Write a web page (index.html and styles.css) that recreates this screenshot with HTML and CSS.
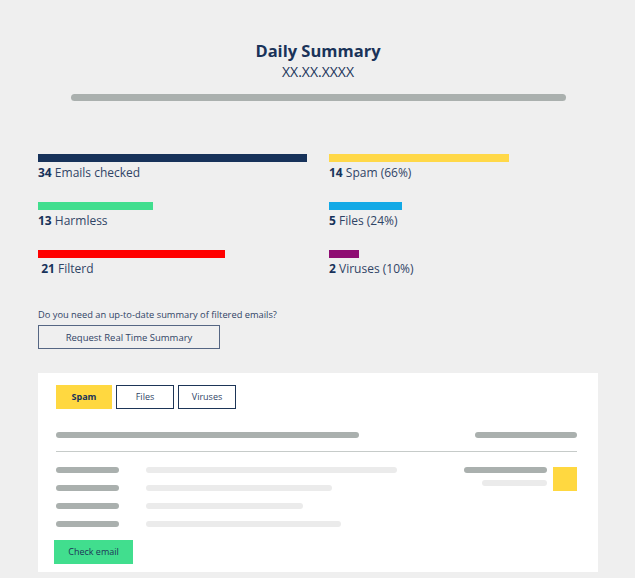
FILE: index.html
```html
<!DOCTYPE html>
<html>
	<head>
		<meta charset="UTF-8">
		<title>Daily Summary</title>
		<link rel="stylesheet" href="styles.css">
	</head>
	<body>
		<div id="page">
			<div class="head">
				<h1>Daily Summary</h1>
				<div class="date">XX.XX.XXXX</div>
				<div class="head-bar"></div>
			</div>

			<div class="stats">
				<div class="stat">
					<div class="bar navy" style="width: 269px;"></div>
					<div class="label"><b>34</b> Emails checked</div>
				</div>
				<div class="stat">
					<div class="bar yellow" style="width: 180px;"></div>
					<div class="label"><b>14</b> Spam (66%)</div>
				</div>
				<div class="stat">
					<div class="bar green" style="width: 115px;"></div>
					<div class="label"><b>13</b> Harmless</div>
				</div>
				<div class="stat">
					<div class="bar blue" style="width: 73px;"></div>
					<div class="label"><b>5</b> Files (24%)</div>
				</div>
				<div class="stat">
					<div class="bar red" style="width: 187px;"></div>
					<div class="label">&nbsp;<b>21</b> Filterd</div>
				</div>
				<div class="stat">
					<div class="bar purple" style="width: 30px;"></div>
					<div class="label"><b>2</b> Viruses (10%)</div>
				</div>
			</div>

			<p class="ask">Do you need an up-to-date summary of filtered emails?</p>
			<a href="javascript:;" class="btn-outline">Request Real Time Summary</a>

			<div class="card">
				<div class="tabs">
					<span class="tab on">Spam</span>
					<span class="tab">Files</span>
					<span class="tab">Viruses</span>
				</div>
				<div class="thead">
					<div class="sk dark" style="width: 303px;"></div>
					<div class="sk dark" style="width: 102px;"></div>
				</div>
				<div class="divider"></div>
				<div class="mail">
					<div class="lines">
						<div class="line"><div class="sk dark short"></div><div class="sk light" style="width: 251px;"></div></div>
						<div class="line"><div class="sk dark short"></div><div class="sk light" style="width: 186px;"></div></div>
						<div class="line"><div class="sk dark short"></div><div class="sk light" style="width: 157px;"></div></div>
						<div class="line"><div class="sk dark short"></div><div class="sk light" style="width: 195px;"></div></div>
					</div>
					<div class="aside">
						<div class="aside-bars">
							<div class="sk dark" style="width: 83px;"></div>
							<div class="sk light" style="width: 65px;"></div>
						</div>
						<div class="square"></div>
					</div>
				</div>
				<a href="javascript:;" class="btn-green">Check email</a>
			</div>
		</div>
	</body>
</html>
```

FILE: styles.css
```css
html, body{
    margin: 0;
    background: #efefef;
}
body{
    font-family: "Open Sans", "Liberation Sans", sans-serif;
    color: #1d3557;
}
#page{
    width: 560px;
    margin-left: 38px;
    padding-top: 39px;
}
.head{
    display: flex;
    flex-direction: column;
    align-items: center;
}
.head h1{
    margin: 0;
    font-size: 16.5px;
    line-height: 24px;
    font-weight: bold;
    color: #1a3359;
}
.date{
    font-size: 14px;
    line-height: 17px;
    color: #1a3359;
}
.head-bar{
    width: 495px;
    height: 7px;
    margin-top: 14px;
    border-radius: 4px;
    background: #aab0ae;
}
.stats{
    display: grid;
    grid-template-columns: 291px 269px;
    row-gap: 20px;
    margin-top: 53px;
}
.bar{
    height: 8px;
}
.navy{ background: #17325a; }
.yellow{ background: #ffd848; }
.green{ background: #41de8e; }
.blue{ background: #12a9e6; }
.red{ background: #ff0000; }
.purple{ background: #8e0c72; }
.label{
    margin-top: 2px;
    font-size: 12px;
    line-height: 18px;
    color: #2f4466;
}
.label b{
    color: #17325a;
}
.ask{
    margin: 31px 0 0;
    font-size: 9.3px;
    line-height: 12px;
    color: #2f4466;
}
.btn-outline{
    display: flex;
    align-items: center;
    justify-content: center;
    box-sizing: border-box;
    width: 182px;
    height: 24px;
    margin-top: 4px;
    border: 1px solid #556683;
    font-size: 9.5px;
    color: #2f4466;
    text-decoration: none;
}
.card{
    box-sizing: border-box;
    height: 199px;
    margin-top: 24px;
    padding: 12px 21px 7px 18px;
    background: #fff;
}
.tabs{
    display: flex;
    gap: 4px;
}
.tab{
    box-sizing: border-box;
    width: 58px;
    height: 24px;
    border: 1px solid #1d3557;
    font-size: 9px;
    line-height: 22px;
    text-align: center;
    color: #2f4466;
}
.tab.on{
    width: 56px;
    border-color: #ffd840;
    background: #ffd840;
    font-weight: bold;
    color: #17325a;
}
.sk{
    height: 6px;
    border-radius: 3px;
}
.sk.dark{ background: #aab0ae; }
.sk.light{ background: #ebebeb; }
.sk.short{ width: 63px; }
.thead{
    display: flex;
    justify-content: space-between;
    margin-top: 23px;
}
.divider{
    height: 1px;
    margin-top: 13px;
    background: #c6cbc9;
}
.mail{
    display: flex;
    justify-content: space-between;
    margin-top: 15px;
}
.lines{
    display: flex;
    flex-direction: column;
    gap: 12px;
}
.line{
    display: flex;
    gap: 27px;
}
.aside{
    display: flex;
    gap: 6px;
}
.aside-bars{
    display: flex;
    flex-direction: column;
    align-items: flex-end;
    gap: 7px;
}
.square{
    width: 24px;
    height: 24px;
    background: #ffd840;
}
.btn-green{
    display: inline-block;
    width: 79px;
    height: 24px;
    margin: 13px 0 0 -2px;
    background: #41de8e;
    font-size: 9px;
    line-height: 24px;
    text-align: center;
    color: #1d3557;
    text-decoration: none;
}
```
